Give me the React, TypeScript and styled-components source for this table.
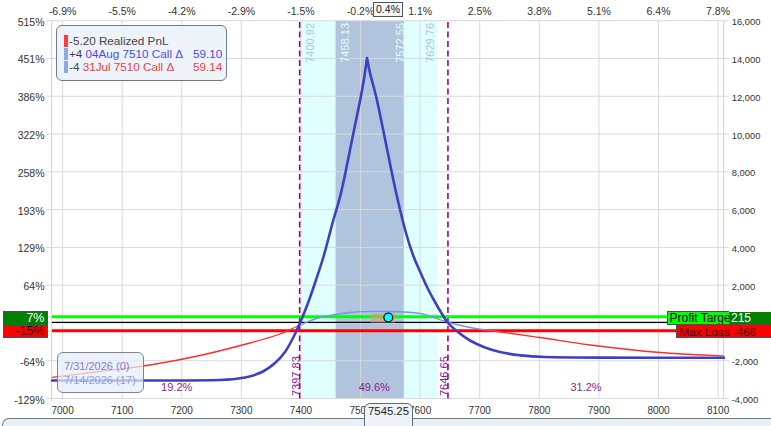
import React from "react";
import styled, { createGlobalStyle } from "styled-components";

const GlobalStyle = createGlobalStyle`
  html, body {
    margin: 0;
    padding: 0;
    background: #fff;
  }
  body {
    font-family: "Liberation Sans", Arial, sans-serif;
  }
`;

type Pt = [number, number];

/* price -> x pixel, grid index -> y pixel */
const X = (p: number) => 62.6 + (p - 7000) * 0.5959;
const GY = (i: number) => 20.7 + i * 37.78;

/* catmull-rom through the points */
const smooth = (pts: Pt[]) => {
  const f = (n: number) => n.toFixed(2);
  let d = `M${f(pts[0][0])},${f(pts[0][1])}`;
  for (let i = 0; i < pts.length - 1; i++) {
    const p0 = pts[i - 1] || pts[i];
    const p1 = pts[i];
    const p2 = pts[i + 1];
    const p3 = pts[i + 2] || p2;
    const c1x = p1[0] + (p2[0] - p0[0]) / 6;
    const c1y = p1[1] + (p2[1] - p0[1]) / 6;
    const c2x = p2[0] - (p3[0] - p1[0]) / 6;
    const c2y = p2[1] - (p3[1] - p1[1]) / 6;
    d += ` C${f(c1x)},${f(c1y)} ${f(c2x)},${f(c2y)} ${f(p2[0])},${f(p2[1])}`;
  }
  return d;
};

const strikes = [7000, 7100, 7200, 7300, 7400, 7500, 7600, 7700, 7800, 7900, 8000, 8100];
const topTicks = ["-6.9%", "-5.5%", "-4.2%", "-2.9%", "-1.5%", "-0.2%", "1.1%", "2.5%", "3.8%", "5.1%", "6.4%", "7.8%"];
const leftTicks = ["515%", "451%", "386%", "322%", "258%", "193%", "129%", "64%", "", "-64%", "-129%"];
const rightTicks = ["16,000", "14,000", "12,000", "10,000", "8,000", "6,000", "4,000", "2,000", "", "-2,000", "-4,000"];

const expiryLeft: Pt[] = [
  [52, 380.5], [150, 380.5], [220, 380], [245, 377.5], [262, 372], [275, 363],
  [285, 352], [293, 338], [300, 323], [308, 303], [316, 280], [324, 255],
  [332, 225], [341.7, 190], [352, 140], [360, 101], [364, 79], [367, 58],
];
const expiryRight: Pt[] = [
  [367, 58], [370, 73], [376.7, 99], [384, 134], [391.7, 172], [398, 201],
  [406, 233], [413, 255], [420, 271.5], [428, 289], [435, 302], [442, 314],
  [448, 323], [458, 332], [470, 340.5], [485, 347.5], [500, 352], [520, 355.3],
  [545, 357], [600, 357.6], [724, 357.8],
];
const todayCurve: Pt[] = [
  [52, 377.3], [100, 371.5], [150, 365], [200, 355.5], [250, 343], [280, 334],
  [300, 325], [320, 317.5], [350, 312.5], [388, 311.5], [420, 313.5], [447, 322],
  [470, 327.5], [497, 331.5], [540, 337.5], [590, 345], [660, 352.5], [724, 356],
];

const Page = styled.div`
  position: relative;
  width: 771px;
  height: 426px;
  overflow: hidden;
  background: #fff;
  font-family: "Liberation Sans", Arial, sans-serif;
  display: flex;
  flex-direction: column;
`;

const ChartArea = styled.div`
  height: 418px;
  flex: none;
`;

const Plot = styled.svg`
  display: block;
  font-family: "Liberation Sans", Arial, sans-serif;
`;

const AxisText = styled.text<{ $size: number }>`
  font-size: ${p => p.$size}px;
  fill: #333;
`;

const BandText = styled.text<{ $fill: string }>`
  font-size: 11px;
  fill: ${p => p.$fill};
`;

const ZoneText = styled.text`
  font-size: 11px;
  fill: #8e1a8e;
`;

const NavPanel = styled.div`
  flex: 1;
  margin-left: 2px;
  border: 1px solid #6e7986;
  border-right: none;
  border-bottom: none;
  border-radius: 7px 0 0 0;
  background: #e9eff7;
`;

/* top-left series legend */
const Legend = styled.div`
  position: absolute;
  left: 56px;
  top: 25px;
  width: 171px;
  height: 56px;
  box-sizing: border-box;
  border: 1px solid #6f7b88;
  border-radius: 6px;
  background: rgba(237, 242, 250, 0.94);
  padding: 8px 0 0 7px;
  display: flex;
  flex-direction: column;
  font-size: 11.7px;
`;

const LegendRow = styled.div`
  display: flex;
  align-items: center;
  height: 13px;
  line-height: 13px;
  white-space: nowrap;
`;

const Marker = styled.span<{ $color: string }>`
  width: 4px;
  height: 12px;
  margin-right: 1px;
  background: ${p => p.$color};
`;

const LegendText = styled.span<{ $color: string }>`
  color: ${p => p.$color};
`;

const LegendLabel = styled.span`
  width: 124px;
  color: #444;
`;

/* bottom-left date legend */
const DateLegend = styled.div`
  position: absolute;
  left: 56.5px;
  top: 351.5px;
  width: 87px;
  height: 41px;
  box-sizing: border-box;
  border: 1px solid #7a8592;
  border-radius: 6px;
  background: rgba(231, 238, 249, 0.72);
  padding: 6px 0 0 6.5px;
  display: flex;
  flex-direction: column;
  font-size: 11px;
`;

const DateItem = styled.span<{ $color: string }>`
  height: 14px;
  line-height: 14px;
  color: ${p => p.$color};
  white-space: nowrap;
`;

/* target tags */
const LeftTags = styled.div`
  position: absolute;
  left: 2.5px;
  top: 310.5px;
  width: 43px;
  border: 1px solid #45515f;
  display: flex;
  flex-direction: column;
`;

const LeftTag = styled.div<{ $bg: string; $fg: string; $h: number }>`
  height: ${p => p.$h}px;
  line-height: ${p => p.$h}px;
  background: ${p => p.$bg};
  color: ${p => p.$fg};
  font-size: 12.5px;
  text-align: right;
  padding-right: 2px;
  overflow: hidden;
  & + & {
    border-top: 1px solid #45515f;
  }
`;

const ProfitTag = styled.div`
  position: absolute;
  left: 666.5px;
  top: 310.5px;
  width: 59.5px;
  height: 12px;
  line-height: 13px;
  border: 1px solid #45515f;
  border-right: none;
  background: #00ff00;
  color: #000;
  font-size: 12px;
  padding-left: 2px;
  white-space: nowrap;
  overflow: hidden;
  text-overflow: clip;
`;

const TargetValue = styled.div`
  position: absolute;
  left: 729px;
  top: 311.5px;
  width: 44px;
  height: 12px;
  line-height: 13px;
  background: #008000;
  color: #fff;
  font-size: 12px;
  padding-left: 2px;
`;

const LossTag = styled.div`
  position: absolute;
  left: 675.5px;
  top: 324px;
  width: 100px;
  height: 12px;
  line-height: 13px;
  border: 1px solid #45515f;
  background: #ff0000;
  color: #2a0000;
  font-size: 11.7px;
  padding-left: 3px;
  white-space: nowrap;
`;

const TopBadge = styled.div`
  position: absolute;
  left: 373px;
  top: 1.5px;
  width: 28px;
  height: 13px;
  line-height: 13px;
  border: 1px solid #4a5663;
  background: #f4f6f9;
  color: #222;
  font-size: 10.5px;
  text-align: center;
`;

const PriceBadge = styled.div`
  position: absolute;
  left: 364px;
  top: 403px;
  width: 47px;
  height: 30px;
  border: 1px solid #5c6772;
  border-radius: 6px 6px 0 0;
  background: #eef3fa;
  color: #222;
  font-size: 11.3px;
  line-height: 15px;
  text-align: center;
`;

export default function App() {
  const top = GY(0);
  const bottom = GY(10);
  const thick = smooth(expiryLeft) + " " + smooth(expiryRight);
  const zoneStop = (x: number) => ((x - 52) / 672).toFixed(4);

  return (
    <Page>
      <GlobalStyle />
      <ChartArea>
        <Plot width={771} height={418} viewBox="0 0 771 418">
          <defs>
            <linearGradient id="zone" gradientUnits="userSpaceOnUse" x1={52} y1={0} x2={724} y2={0}>
              <stop offset={zoneStop(287)} stopColor="#ff2a2a" />
              <stop offset={zoneStop(303)} stopColor="#7196ea" />
              <stop offset={zoneStop(482)} stopColor="#7196ea" />
              <stop offset={zoneStop(500)} stopColor="#ff2a2a" />
            </linearGradient>
          </defs>

          {/* expected move bands */}
          <rect x={X(7400.92)} y={top} width={X(7629.76) - X(7400.92)} height={bottom - top} fill="#e0ffff" />
          <rect x={X(7458.13)} y={top} width={X(7572.55) - X(7458.13)} height={bottom - top} fill="#b0c4de" />

          {/* grid */}
          {Array.from({ length: 11 }, (_, i) => (
            <line key={"h" + i} x1={46} x2={729} y1={GY(i)} y2={GY(i)} stroke="#d9d9d9" strokeWidth={1} />
          ))}
          {strikes.map(s => (
            <line key={"v" + s} x1={X(s)} x2={X(s)} y1={top} y2={bottom} stroke="#d9d9d9" strokeWidth={1} />
          ))}
          <line x1={51.7} x2={51.7} y1={top} y2={bottom + 3} stroke="#d3d3d3" />
          <line x1={723.7} x2={723.7} y1={top} y2={bottom} stroke="#d3d3d3" />

          <BandText $fill="#b0c4de" transform={`translate(314.3,23) rotate(-90)`} textAnchor="end">7400.92</BandText>
          <BandText $fill="#e0ffff" transform={`translate(349.3,23) rotate(-90)`} textAnchor="end">7458.13</BandText>
          <BandText $fill="#e0ffff" transform={`translate(404.3,23) rotate(-90)`} textAnchor="end">7572.55</BandText>
          <BandText $fill="#b0c4de" transform={`translate(433.5,23) rotate(-90)`} textAnchor="end">7629.76</BandText>

          {/* break-even lines */}
          <line x1={X(7397.83)} x2={X(7397.83)} y1={22} y2={bottom} stroke="#990099" strokeWidth={1.6} strokeDasharray="6 3.5" />
          <line x1={X(7646.65)} x2={X(7646.65)} y1={22} y2={bottom} stroke="#990099" strokeWidth={1.6} strokeDasharray="6 3.5" />

          {/* target / zero / max loss */}
          <line x1={52} x2={771} y1={316.7} y2={316.7} stroke="#00ff00" strokeWidth={3} />
          <line x1={52} x2={771} y1={322.4} y2={322.4} stroke="#000" strokeWidth={1.4} />
          <line x1={52} x2={771} y1={330.7} y2={330.7} stroke="#ff0000" strokeWidth={3} />

          {/* pnl curves */}
          <path d={smooth(todayCurve)} fill="none" stroke="url(#zone)" strokeWidth={1.3} />
          <path d={thick} fill="none" stroke="#3f3fc2" strokeWidth={2.6} strokeLinecap="round" strokeLinejoin="round" />

          <rect x={370.7} y={313.3} width={24.3} height={9.4} fill="rgba(226,150,118,0.55)" />
          <circle cx={388.3} cy={317.5} r={4.4} fill="#00ffff" stroke="#111" strokeWidth={1.3} />

          <ZoneText transform={`translate(300.2,396) rotate(-90)`}>7397.83</ZoneText>
          <ZoneText transform={`translate(448.3,396) rotate(-90)`}>7646.65</ZoneText>
          <ZoneText x={176.7} y={390.5} textAnchor="middle">19.2%</ZoneText>
          <ZoneText x={374.3} y={390.5} textAnchor="middle">49.6%</ZoneText>
          <ZoneText x={586} y={390.5} textAnchor="middle">31.2%</ZoneText>

          {/* axes */}
          {topTicks.map((t, i) => (
            <AxisText key={"t" + t} $size={10.5} x={X(strikes[i])} y={14.8} textAnchor="middle">{t}</AxisText>
          ))}
          {leftTicks.map((t, i) =>
            t ? (
              <AxisText key={"l" + t} $size={10.5} x={44.5} y={GY(i) + 5} textAnchor="end">{t}</AxisText>
            ) : null
          )}
          {rightTicks.map((t, i) =>
            t ? (
              <AxisText key={"r" + t} $size={9.4} x={731.7} y={GY(i) + 4.5}>{t}</AxisText>
            ) : null
          )}
          {strikes.map(s => (
            <AxisText key={"b" + s} $size={10} x={X(s)} y={414.3} textAnchor="middle">{s}</AxisText>
          ))}
        </Plot>
      </ChartArea>
      <NavPanel />

      <Legend>
        <LegendRow>
          <Marker $color="#ff3b3b" />
          <LegendText $color="#444">-5.20 Realized PnL</LegendText>
        </LegendRow>
        <LegendRow>
          <Marker $color="#8ea8e6" />
          <LegendLabel>
            +4 <LegendText $color="#4c4cf2">04Aug 7510 Call Δ</LegendText>
          </LegendLabel>
          <LegendText $color="#4c4cf2">59.10</LegendText>
        </LegendRow>
        <LegendRow>
          <Marker $color="#8ea8e6" />
          <LegendLabel>
            -4 <LegendText $color="#f53c3c">31Jul 7510 Call Δ</LegendText>
          </LegendLabel>
          <LegendText $color="#f53c3c">59.14</LegendText>
        </LegendRow>
      </Legend>

      <DateLegend>
        <DateItem $color="#7d7dda">7/31/2026 (0)</DateItem>
        <DateItem $color="#8e9fe0">7/14/2026 (17)</DateItem>
      </DateLegend>

      <LeftTags>
        <LeftTag $bg="#008000" $fg="#fff" $h={13}>7%</LeftTag>
        <LeftTag $bg="#ff0000" $fg="#1a0000" $h={11.5}>-15%</LeftTag>
      </LeftTags>

      <ProfitTag>Profit Target</ProfitTag>
      <TargetValue>215</TargetValue>
      <LossTag>Max Loss -466</LossTag>

      <TopBadge>0.4%</TopBadge>
      <PriceBadge>7545.25</PriceBadge>
    </Page>
  );
}
